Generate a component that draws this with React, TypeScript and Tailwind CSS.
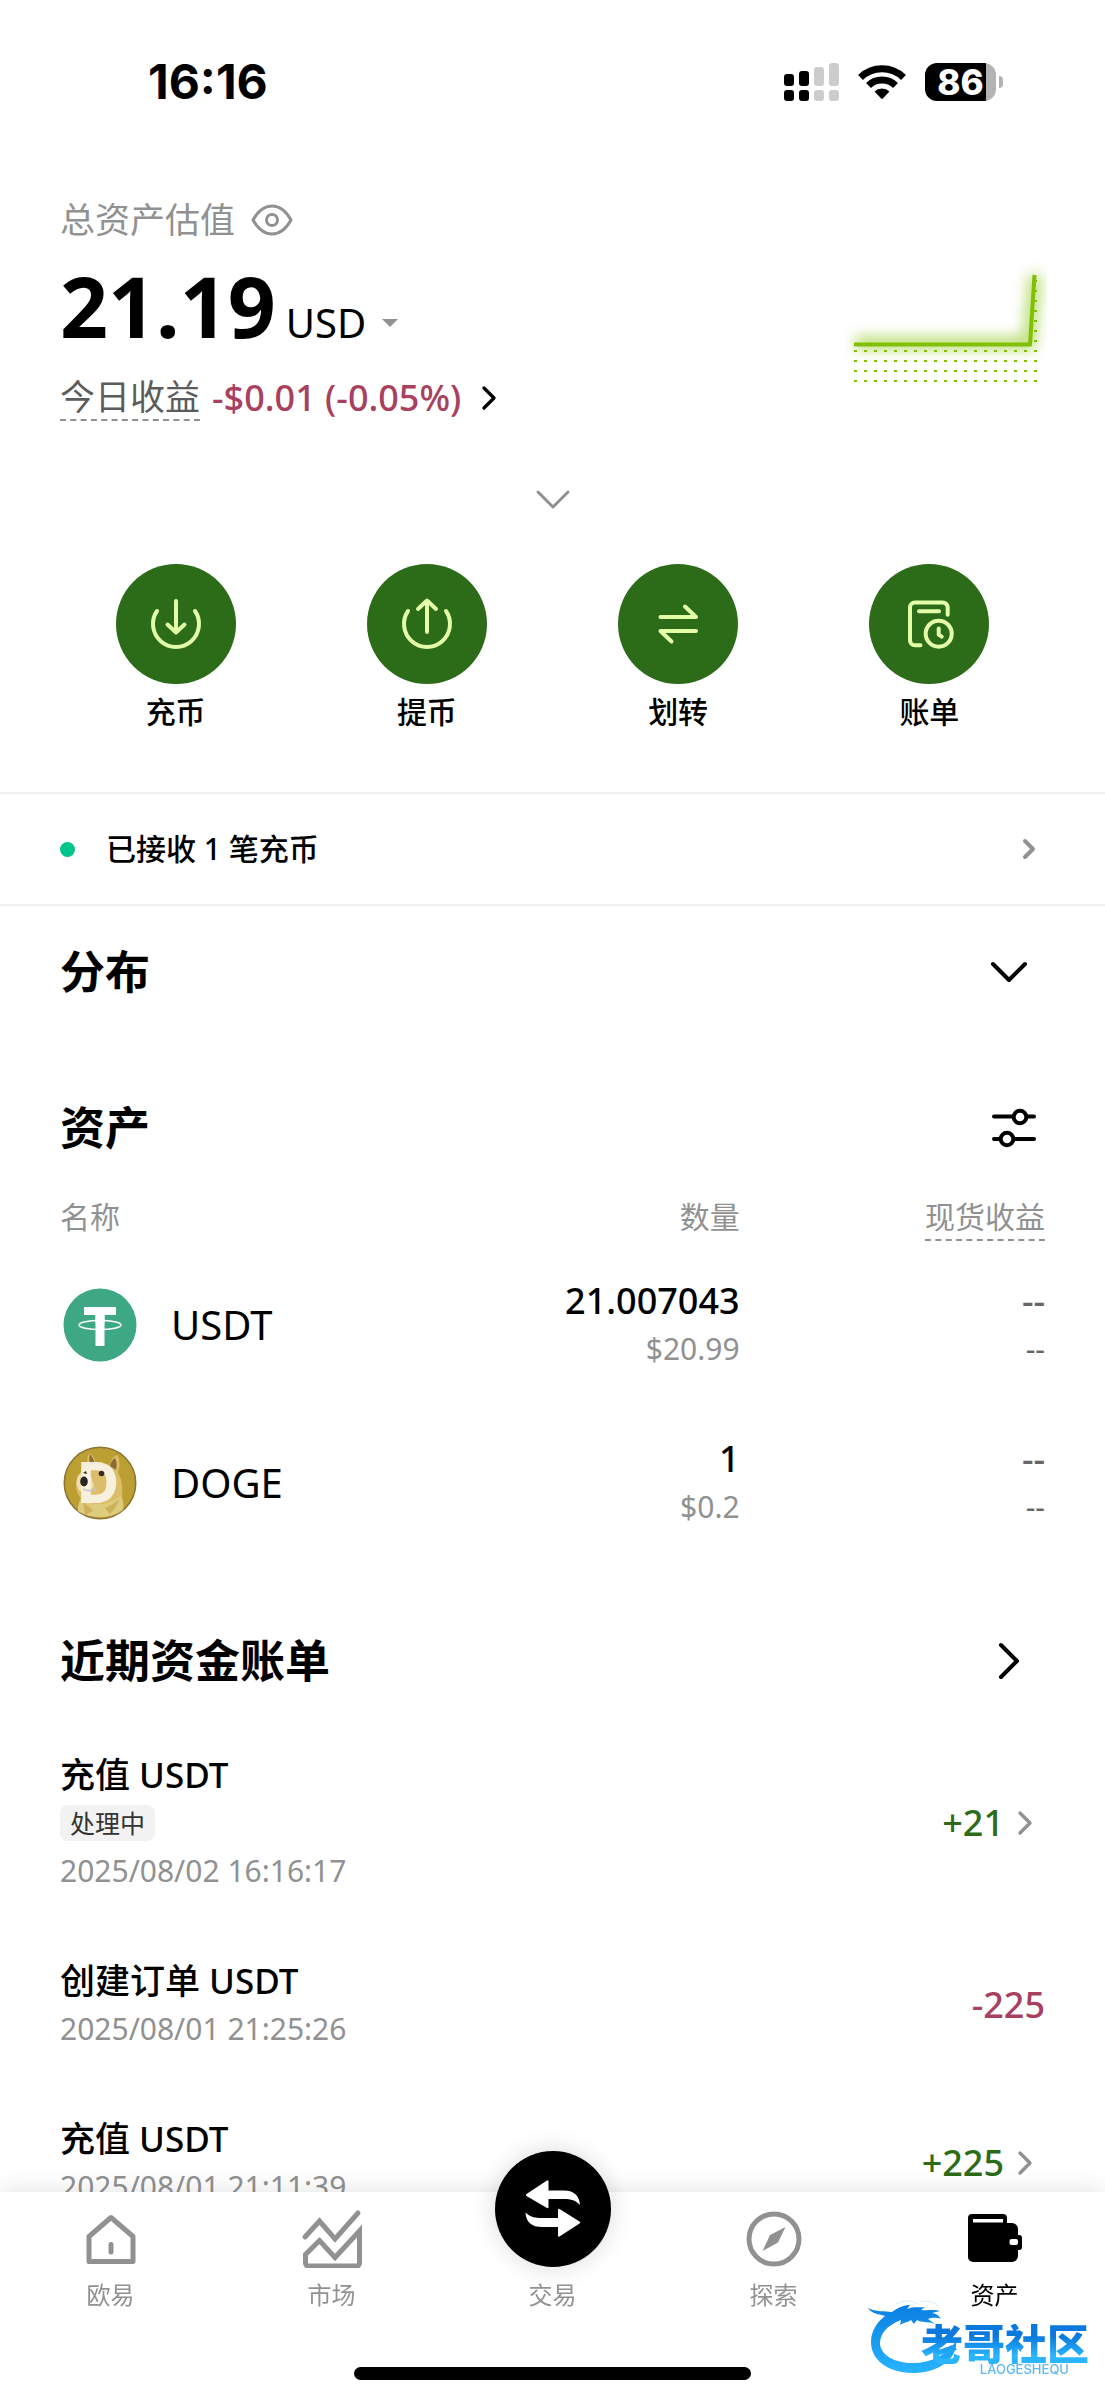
import { ReactNode, useState } from "react";
import { ChevronDown, ChevronRight } from "lucide-react";

interface Asset {
  symbol: string;
  amount: string;
  value: string;
  logo: ReactNode;
}

interface Bill {
  id: number;
  title: string;
  status?: string;
  time: string;
  amount: string;
  hasDetail: boolean;
}

const SignalIcon = () => (
  <svg width="56" height="38" viewBox="0 0 56 38" aria-hidden="true">
    <g fill="#000">
      <rect x="0" y="11" width="10" height="12" rx="3" />
      <rect x="15" y="8" width="10" height="15" rx="3" />
      <rect x="0" y="27" width="10" height="11" rx="3" />
      <rect x="15" y="27" width="10" height="11" rx="3" />
    </g>
    <g fill="#ccc">
      <rect x="30" y="4" width="10" height="19" rx="3" />
      <rect x="45" y="0" width="10" height="23" rx="3" />
      <rect x="30" y="27" width="10" height="11" rx="3" />
      <rect x="45" y="27" width="10" height="11" rx="3" />
    </g>
  </svg>
);

const WifiIcon = () => (
  <svg width="48" height="36" viewBox="0 0 48 36" aria-hidden="true">
    <g fill="none" stroke="#000" strokeWidth="7">
      <path d="M2.5 13.5A31 31 0 0 1 45.500 13.500" />
      <path d="M10.500 21.500A19.500 19.500 0 0 1 37.500 21.500" />
    </g>
    <path d="M16.500 27.500A11 11 0 0 1 31.500 27.500L24.800 34.600A1.200 1.200 0 0 1 23.200 34.600Z" />
  </svg>
);

const EyeIcon = () => (
  <svg width="42" height="32" viewBox="0 0 42 32" fill="none" stroke="#919191" strokeWidth="3" aria-hidden="true">
    <path d="M2 16C7 7 13.500 2 21 2s14 5 19 14c-5 9-11.500 14-19 14S7 25 2 16Z" strokeLinejoin="round" />
    <circle cx="21" cy="16" r="5.500" />
  </svg>
);

const DepositIcon = () => (
  <svg width="60" height="60" viewBox="0 0 60 60" fill="none" stroke="#e3ffa8" strokeWidth="4" strokeLinecap="round" strokeLinejoin="round" aria-hidden="true">
    <path d="M11 17A23 23 0 1 0 49 17" />
    <path d="M30 7V38M21.500 30.500l8.500 8 8.500-8" />
  </svg>
);

const WithdrawIcon = () => (
  <svg width="60" height="60" viewBox="0 0 60 60" fill="none" stroke="#e3ffa8" strokeWidth="4" strokeLinecap="round" strokeLinejoin="round" aria-hidden="true">
    <path d="M11 17A23 23 0 1 0 49 17" />
    <path d="M30 38V7M21 15l9-8.500 9 8.500" />
  </svg>
);

const TransferIcon = () => (
  <svg width="60" height="60" viewBox="0 0 60 60" fill="none" stroke="#e3ffa8" strokeWidth="4" strokeLinecap="round" strokeLinejoin="round" aria-hidden="true">
    <path d="M12.500 23H48L37 12.500" />
    <path d="M48 37H12.500L23.500 47.500" />
  </svg>
);

const BillIcon = () => (
  <svg width="60" height="60" viewBox="0 0 60 60" fill="none" stroke="#e3ffa8" strokeWidth="4" strokeLinecap="round" strokeLinejoin="round" aria-hidden="true">
    <path d="M48.700 20.700V13.500a5 5 0 0 0-5-5H16a5 5 0 0 0-5 5V46.300a5 5 0 0 0 5 5h5.500" />
    <path d="M20 17.300H40" />
    <circle cx="39.700" cy="39.700" r="13" />
    <path d="M39.700 34.500v6.200l3 2" />
  </svg>
);

const UsdtLogo = () => (
  <svg width="74" height="74" viewBox="0 0 74 74" className="shrink-0" aria-hidden="true">
    <circle cx="37" cy="37" r="36.500" fill="#3da883" />
    <rect x="21" y="19" width="32" height="8" fill="#fff" />
    <rect x="32.500" y="19" width="9" height="39" fill="#fff" />
    <ellipse cx="37" cy="37" rx="21" ry="4.500" fill="none" stroke="#fff" strokeWidth="1.500" />
    <rect x="32.500" y="27" width="9" height="8.500" fill="#fff" />
  </svg>
);

const DogeLogo = () => (
  <svg width="74" height="74" viewBox="0 0 74 74" className="shrink-0" aria-hidden="true">
    <circle cx="37" cy="37" r="35.700" fill="#bb9f33" stroke="#8e7532" strokeWidth="1.600" />
    <path d="M24 20C24 12 25 8 27 7c3 2 5 7 6 11l13 1c2-5 5-9 8-10 3 4 3 12 1 18 4 6 5 15 4 24 2 5 2 9 1 13-13 10-31 9-45 1 0-5 1-10 3-13-5-5-6-12-4-19 1-5 5-9 10-13Z" fill="#dcbd6b" />
    <path d="M27 8c2 2 4 6 5 10l-5 1c-1-4-1-8 0-11ZM52 12c-3 2-5 5-5 8l6 4c1-4 1-9-1-12Z" fill="#8d6b35" />
    <path d="M15 65c0-6 2-10 4-13 9 8 24 9 39-2 2 6 2 10 1 14-13 9-31 9-44 1Z" fill="#dfcb7c" />
    <path d="M20 56c4 3 7 5 10 9l-8 4M42 62c5-2 9-4 14-9-1 5-4 10-9 15" fill="#ccb15a" />
    <path d="M15 30c4-3 10-3 13 1l3 9c-3 6-8 8-14 5-4-4-4-10-2-15Z" fill="#f0dfae" />
    <text x="15" y="57" fontFamily="Inter, sans-serif" fontSize="56" fontWeight="800" fill="#f8f3e6" fillOpacity="0.93">D</text>
    <ellipse cx="21" cy="35.500" rx="3.800" ry="5" fill="#2a2522" />
    <circle cx="38.500" cy="27.500" r="2.800" fill="#352b22" />
    <path d="M20 27l3-2 1 3z" fill="#352b22" />
    <path d="M20 43c4 2 9 2 13 0" fill="none" stroke="#c9c7c8" strokeWidth="1.500" />
  </svg>
);

const FilterIcon = () => (
  <svg width="46" height="40" viewBox="0 0 46 40" fill="none" stroke="#000" strokeWidth="4" strokeLinecap="round" aria-hidden="true">
    <circle cx="29" cy="9" r="6.300" />
    <circle cx="16" cy="31" r="6.300" />
    <path d="M3 8.500H22M36 8.500H43M3 31H9M23 31H43" />
  </svg>
);

const HomeIcon = () => (
  <svg width="60" height="60" viewBox="0 0 60 60" fill="none" stroke="#919191" strokeWidth="5" strokeLinejoin="round" strokeLinecap="round" aria-hidden="true">
    <path d="M8 28.500L30 9.500 52 28.500V53.500H8Z" />
    <path d="M30 36.500V44" />
  </svg>
);

const MarketIcon = () => (
  <svg width="62" height="60" viewBox="0 0 62 60" fill="none" stroke="#919191" strokeWidth="5" aria-hidden="true">
    <path d="M4 29L18.500 13 34 31 57 5" strokeLinecap="round" />
    <path d="M4.500 46.500L18.500 32.500 34 49.500 58.500 23V55a3 3 0 0 1-3 3H7.500a3 3 0 0 1-3-3Z" />
  </svg>
);

const CompassIcon = () => (
  <svg width="60" height="60" viewBox="0 0 60 60" aria-hidden="true">
    <circle cx="30" cy="31" r="25" fill="none" stroke="#919191" strokeWidth="5" />
    <path d="M41.500 19L34 34.500 18.500 43 26 27Z" fill="#919191" />
  </svg>
);

const WalletIcon = () => (
  <svg width="60" height="60" viewBox="0 0 60 60" aria-hidden="true">
    <path d="M7 6H38a4 4 0 0 1 4 4v5h5a6 6 0 0 1 6 6v6h1a3 3 0 0 1 3 3V39a3 3 0 0 1-3 3H53v6a6 6 0 0 1-6 6H8a5 5 0 0 1-5-5V10a4 4 0 0 1 4-4Z" />
    <rect x="8" y="11" width="30" height="3.500" fill="#fff" />
    <rect x="44.500" y="31" width="8.500" height="6" rx="2" fill="#fff" />
  </svg>
);

const SwapIcon = () => (
  <svg width="60" height="60" viewBox="0 0 60 60" fill="#fff" aria-hidden="true">
    <path d="M3.500 15L24 1.500a1 1 0 0 1 1.500 1V11.500H41C50 11.500 56.500 16 57 26 53 21.500 48 20 41 20H25.500V28a1 1 0 0 1-1.500 1L3.500 17a1.200 1.200 0 0 1 0-2Z" />
    <path d="M56.500 44.500L36.500 57.500a1 1 0 0 1-1.500-1V48H19C9 48 3 43.500 2.500 33.500 7 38 12 39 19 39H35V31a1 1 0 0 1 1.500-1L56.500 42.500a1.200 1.200 0 0 1 0 2Z" />
  </svg>
);

const COLUMNS = Array.from({ length: 18 }, (_, i) => i * 10);

const TrendChart = () => (
  <svg width="202" height="140" viewBox="0 0 202 140" role="img" aria-label="资产走势">
    <defs>
      <filter id="glow" x="-20%" y="-40%" width="140%" height="180%">
        <feGaussianBlur stdDeviation="7" />
      </filter>
    </defs>
    <path d="M10 86H184L190 18" fill="none" stroke="#80c000" strokeOpacity="0.6" strokeWidth="12" filter="url(#glow)" />
    <g fill="#80c000">
      {[94, 104, 114, 124].map((y) =>
        COLUMNS.map((x) => <rect key={`${x}-${y}`} x={9 + x} y={y - 1} width="3" height="2" />)
      )}
      {[24, 34, 44, 54, 64, 74, 84, 94, 104, 114, 124].map((y) => (
        <rect key={y} x="189" y={y - 1} width="3" height="2" />
      ))}
    </g>
    <path d="M9 87.500H185L189.500 18" fill="none" stroke="#80c000" strokeWidth="4" strokeLinejoin="round" />
  </svg>
);

const DragonIcon = () => (
  <svg width="90" height="74" viewBox="0 0 90 74" aria-hidden="true">
    <defs>
      <linearGradient id="dragon" x1="0" y1="0" x2="0" y2="1">
        <stop offset="0" stopColor="#0a7fe0" />
        <stop offset="1" stopColor="#27b4ff" />
      </linearGradient>
    </defs>
    <path d="M0 8c8 4 16 3 24 4 7-5 12-7 18-7l-3 4c8-3 13-1 18-2l-4 3c7 1 13-1 19 1l-8 2c5 1 6 2 9 6-6-2-10-1-13 0l7 5c-8-3-13-1-18-4l-3 4-3-4c-4 3-7 2-11 5l1-5C18 26 12 34 12 44c1 11 14 19 33 19 18 0 34-8 43-22 2 16-15 31-40 32C22 74 3 61 3 42 3 31 9 22 17 16 11 14 4 14 0 8Z" fill="url(#dragon)" />
    <path d="M28 4C36-1 44 1 50 4M52 2c8-2 16 0 20 5" fill="none" stroke="#d8ecfb" strokeWidth="1" />
  </svg>
);

const actions = [
  { label: "充币", icon: <DepositIcon /> },
  { label: "提币", icon: <WithdrawIcon /> },
  { label: "划转", icon: <TransferIcon /> },
  { label: "账单", icon: <BillIcon /> },
];

const assets: Asset[] = [
  { symbol: "USDT", amount: "21.007043", value: "$20.99", logo: <UsdtLogo /> },
  { symbol: "DOGE", amount: "1", value: "$0.2", logo: <DogeLogo /> },
];

const bills: Bill[] = [
  { id: 1, title: "充值 USDT", status: "处理中", time: "2025/08/02 16:16:17", amount: "+21", hasDetail: true },
  { id: 2, title: "创建订单 USDT", time: "2025/08/01 21:25:26", amount: "-225", hasDetail: false },
  { id: 3, title: "充值 USDT", time: "2025/08/01 21:11:39", amount: "+225", hasDetail: true },
];

const tabs = [
  { key: "home", label: "欧易", icon: <HomeIcon /> },
  { key: "market", label: "市场", icon: <MarketIcon /> },
  { key: "trade", label: "交易", icon: null },
  { key: "explore", label: "探索", icon: <CompassIcon /> },
  { key: "assets", label: "资产", icon: <WalletIcon /> },
];

const App = () => {
  const [activeTab, setActiveTab] = useState("assets");

  return (
    <div className="min-h-screen bg-white font-['Noto_Sans','Noto_Sans_CJK_SC',sans-serif] text-black">
      <div className="flex h-[164px] items-center justify-between pr-[102px] pl-[148px]">
        <span className="font-['Inter',sans-serif] text-[48px] leading-[48px] font-bold">16:16</span>
        <div className="flex items-center">
          <SignalIcon />
          <div className="ml-[18px]">
            <WifiIcon />
          </div>
          <div className="ml-[19px] flex h-[38px] w-[71px] items-center justify-center rounded-[12px] bg-linear-to-r from-black from-86% to-[#b3b3b3] to-86% font-['Inter',sans-serif] text-[35px] leading-[38px] font-extrabold text-white">
            86
          </div>
          <div className="ml-[3px] h-[12px] w-[4px] rounded-r-full bg-[#b3b3b3]" />
        </div>
      </div>

      <section className="mt-8 flex items-start justify-between pr-[58px] pl-[60px]">
        <div>
          <div className="flex items-center gap-4">
            <h1 className="text-[35px] leading-[48px] text-[#919191]">总资产估值</h1>
            <button type="button" aria-label="隐藏资产">
              <EyeIcon />
            </button>
          </div>
          <div className="mt-3 flex items-baseline">
            <span className="text-[84px] leading-[100px] font-bold">21.19</span>
            <button type="button" className="ml-[10px] flex items-center gap-4 text-[40px] leading-[48px]">
              USD
              <span className="border-x-8 border-t-8 border-x-transparent border-t-[#919191]" />
            </button>
          </div>
          <a href="#profit" className="mt-[18px] flex h-[48px] items-center text-[35px] leading-[44px]">
            <span className="border-b-2 border-dashed border-[#919191] text-[#5c5c5c]">今日收益</span>
            <span className="ml-3 text-[36px] font-medium text-[#a8405f]">-$0.01 (-0.05%)</span>
            <ChevronRight className="ml-2" size={40} strokeWidth={2} />
          </a>
        </div>
        <div className="mt-[61px]">
          <TrendChart />
        </div>
      </section>

      <div className="mt-[58px] flex justify-center">
        <button type="button" aria-label="展开" className="flex h-10 items-center text-[#919191]">
          <svg width="36" height="22" viewBox="0 0 36 22" fill="none" stroke="currentColor" strokeWidth="3" strokeLinecap="round" strokeLinejoin="round">
            <path d="M3 3L18 18 33 3" />
          </svg>
        </button>
      </div>

      <div className="mt-[44px] grid grid-cols-4 px-[50px] pb-[60px]">
        {actions.map((action) => (
          <button key={action.label} type="button" className="flex flex-col items-center gap-2 text-[30px] leading-[40px] font-medium">
            <span className="flex size-[120px] items-center justify-center rounded-full bg-[#2c6c18]">{action.icon}</span>
            {action.label}
          </button>
        ))}
      </div>

      <a href="#deposit" className="flex h-[114px] items-center border-y-2 border-[#f0f0f0] px-[60px]">
        <span className="size-[15px] rounded-full bg-[#00c48c]" />
        <span className="ml-[31px] flex-1 text-[30px] leading-[40px] font-medium">已接收 1 笔充币</span>
        <ChevronRight size={32} strokeWidth={3} className="text-[#919191]" />
      </a>

      <section className="mt-[34px] flex items-center justify-between px-[60px]">
        <h2 className="text-[45px] leading-[64px] font-semibold">分布</h2>
        <button type="button" aria-label="展开分布" className="mr-1">
          <ChevronDown size={64} strokeWidth={1.5} />
        </button>
      </section>

      <section className="mt-[92px] px-[60px]">
        <div className="flex items-center justify-between">
          <h2 className="text-[45px] leading-[64px] font-semibold">资产</h2>
          <button type="button" aria-label="筛选" className="mr-2">
            <FilterIcon />
          </button>
        </div>
        <table className="mt-[35px] w-full table-fixed">
          <thead>
            <tr className="h-[51px] align-top text-[30px] leading-[44px] text-[#919191]">
              <th className="w-[40%] text-left font-normal">名称</th>
              <th className="w-[29%] text-right font-normal">数量</th>
              <th className="w-[31%] text-right font-normal">
                <span className="inline-block border-b-2 border-dashed border-[#919191]">现货收益</span>
              </th>
            </tr>
          </thead>
          <tbody>
            {assets.map((asset) => (
              <tr key={asset.symbol} className="h-[158px]">
                <td>
                  <div className="flex items-center gap-[34px] pl-[3px] text-[40px] leading-[48px]">
                    {asset.logo}
                    {asset.symbol}
                  </div>
                </td>
                <td className="text-right">
                  <div className="text-[36px] leading-[48px] font-medium">{asset.amount}</div>
                  <div className="text-[30px] leading-[48px] text-[#919191]">{asset.value}</div>
                </td>
                <td className="text-right text-[#666666]">
                  <div className="text-[36px] leading-[48px] font-medium">--</div>
                  <div className="text-[30px] leading-[48px]">--</div>
                </td>
              </tr>
            ))}
          </tbody>
        </table>
      </section>

      <section className="mt-[67px] px-[60px]">
        <div className="flex items-center justify-between">
          <h2 className="text-[45px] leading-[64px] font-semibold">近期资金账单</h2>
          <button type="button" aria-label="全部账单" className="mr-1">
            <ChevronRight size={64} strokeWidth={1.5} />
          </button>
        </div>
        <ul className="mt-[27px]">
          {bills.map((bill) => (
            <li key={bill.id} className="flex items-center justify-between py-[31px]">
              <div>
                <div className="text-[35px] leading-[48px] font-medium">{bill.title}</div>
                {bill.status && (
                  <div className="flex h-[48px] items-center">
                    <span className="rounded-[8px] bg-[#f2f2f2] px-[10px] text-[25px] leading-[36px] text-[#333333]">{bill.status}</span>
                  </div>
                )}
                <div className="text-[30px] leading-[48px] text-[#919191]">{bill.time}</div>
              </div>
              <div className="flex items-center text-[36px] leading-[48px] font-medium">
                <span className={bill.amount.startsWith("+") ? "text-[#2c6c18]" : "text-[#a8405f]"}>{bill.amount}</span>
                {bill.hasDetail && <ChevronRight size={40} strokeWidth={2} className="ml-px text-[#919191]" />}
              </div>
            </li>
          ))}
        </ul>
      </section>

      <nav className="fixed inset-x-0 bottom-0 bg-white shadow-[0_0_24px_rgba(0,0,0,0.12)]">
        <div className="grid h-[175px] grid-cols-5">
          {tabs.map((tab) => (
            <button
              key={tab.key}
              type="button"
              onClick={() => setActiveTab(tab.key)}
              className={`flex flex-col items-center text-[24px] leading-[32px] ${activeTab === tab.key ? "text-black" : "text-[#919191]"}`}
            >
              {tab.key === "trade" ? (
                <span className="-mt-[41px] flex size-[116px] items-center justify-center rounded-full bg-black shadow-[0_0_24px_rgba(0,0,0,0.15)]">
                  <SwapIcon />
                </span>
              ) : (
                <span className="mt-[17px] flex h-[58px] items-center">{tab.icon}</span>
              )}
              <span className="mt-3">{tab.label}</span>
            </button>
          ))}
        </div>
        <div className="mx-auto mb-5 h-[13px] w-[36%] rounded-full bg-black" />
        <div className="absolute right-4 bottom-[26px] flex items-end">
          <DragonIcon />
          <div className="-ml-[37px] flex flex-col items-end">
            <span className="bg-linear-to-b from-[#0a78dc] from-30% to-[#2bb5ff] to-80% bg-clip-text text-[42px] leading-[40px] font-black text-transparent">
              老哥社区
            </span>
            <span className="mr-5 font-['Inter',sans-serif] text-[13px] leading-[10px] font-medium text-[#5fb8f2]">
              LAOGESHEQU
            </span>
          </div>
        </div>
      </nav>
    </div>
  );
};

export default App;
